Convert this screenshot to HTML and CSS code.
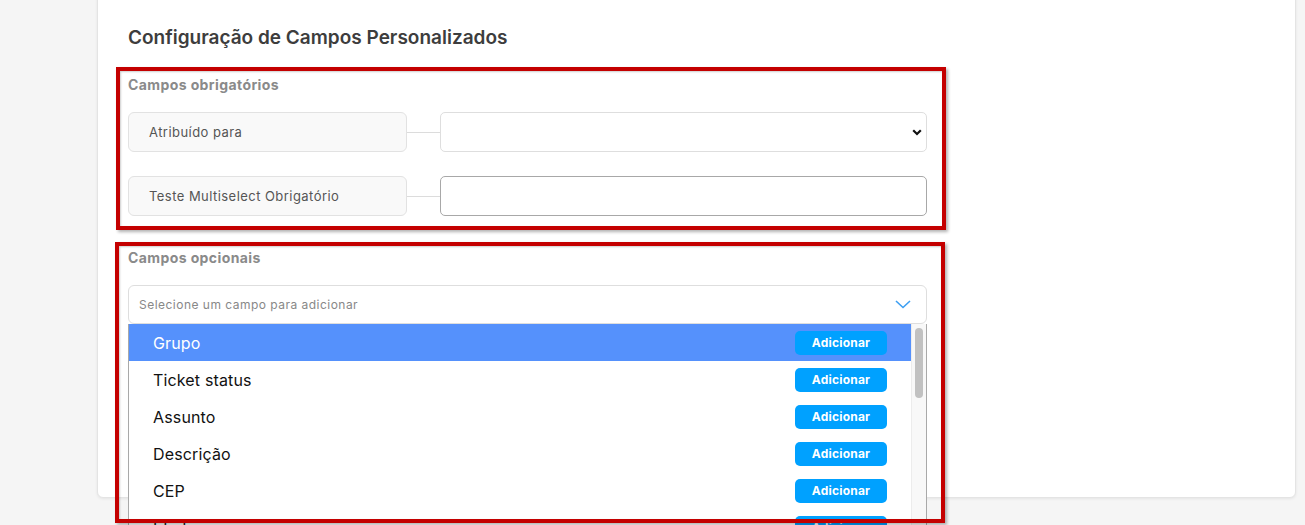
FILE: index.html
```html
<!DOCTYPE html>
<html lang="pt-BR">
<head>
<meta charset="utf-8">
<title>Configuração de Campos Personalizados</title>
<link rel="stylesheet" href="styles.css">
</head>
<body>
<div class="card">
  <h2 class="title">Configuração de Campos Personalizados</h2>

  <section class="group group-required">
    <div class="mark mark-required"></div>
    <h3 class="group-title">Campos obrigatórios</h3>
    <div class="rows">
      <div class="field-row">
        <div class="field-label">Atribuído para</div>
        <span class="connector"></span>
        <select class="field-select"><option></option></select>
      </div>
      <div class="field-row">
        <div class="field-label">Teste Multiselect Obrigatório</div>
        <span class="connector"></span>
        <input class="field-input" type="text">
      </div>
    </div>
  </section>

  <section class="group group-optional">
    <div class="mark mark-optional"></div>
    <h3 class="group-title">Campos opcionais</h3>
    <div class="picker">
      <div class="picker-box">
        <span class="picker-placeholder">Selecione um campo para adicionar</span>
        <svg class="picker-chevron" width="16" height="9" viewBox="0 0 16 9"><polyline points="1,1 8,7.5 15,1" fill="none" stroke="#3d9ff2" stroke-width="1.6"/></svg>
      </div>
      <div class="picker-menu">
        <ul class="picker-list">
          <li class="active"><span>Grupo</span><button>Adicionar</button></li>
          <li><span>Ticket status</span><button>Adicionar</button></li>
          <li><span>Assunto</span><button>Adicionar</button></li>
          <li><span>Descrição</span><button>Adicionar</button></li>
          <li><span>CEP</span><button>Adicionar</button></li>
          <li><span>Idade</span><button>Adicionar</button></li>
        </ul>
        <div class="picker-scroll"><div class="picker-thumb"></div></div>
      </div>
    </div>
  </section>
</div>
</body>
</html>
```

FILE: styles.css
```css
html, body {
  height: 525px;
  overflow: hidden;
}
body {
  margin: 0;
  background-color: #f5f5f5;
  font-family: Inter, "Noto Sans", sans-serif;
  color: #222;
}

.card {
  box-sizing: border-box;
  height: 508px;
  margin: -10px 9px 0 97px;
  padding: 35px 30px 0;
  background-color: #fff;
  border: 1px solid #e4e4e4;
  border-radius: 6px;
  box-shadow: 0 1px 3px rgba(0,0,0,0.07);
}
.title {
  margin: 0;
  font-size: 19px;
  line-height: 24px;
  font-weight: 600;
  color: #3d3d3d;
}

.group {
  position: relative;
  width: 799px;
}
.group-required { margin-top: 26px; }
.group-optional { margin-top: 33px; }
.group-title {
  margin: 0;
  font-size: 14px;
  line-height: 18px;
  font-weight: 700;
  letter-spacing: 0.4px;
  color: #8a8a8a;
}

/* red annotation frames */
.mark {
  position: absolute;
  z-index: 5;
  border: 4px solid #c40000;
  box-shadow: 2px 2px 3px rgba(0,0,0,0.3), inset 1px 1px 2px rgba(0,0,0,0.2);
  pointer-events: none;
}
.mark-required { top: -9px; left: -12px; right: -19px; bottom: -14px; }
.mark-optional { top: -7px; left: -13px; right: -18px; bottom: -199px; }

.rows {
  display: flex;
  flex-direction: column;
  gap: 24px;
  margin-top: 18px;
}
.field-row {
  display: flex;
  align-items: center;
  height: 40px;
}
.field-label {
  box-sizing: border-box;
  flex: 0 0 279px;
  height: 40px;
  display: flex;
  align-items: center;
  padding-left: 20px;
  background-color: #f9f9f9;
  border: 1px solid #e2e2e2;
  border-radius: 6px;
  font-size: 13px;
  letter-spacing: 0.45px;
  color: #555;
}
.connector {
  flex: 0 0 33px;
  height: 1px;
  background-color: #dcdcdc;
}
.field-select, .field-input {
  box-sizing: border-box;
  flex: 1;
  height: 40px;
  margin: 0;
  border-radius: 5px;
  background-color: #fff;
  font-family: inherit;
}
.field-select {
  appearance: none;
  -webkit-appearance: none;
  border: 1px solid #dedede;
  background-image: url("data:image/svg+xml,%3Csvg xmlns='http://www.w3.org/2000/svg' width='10' height='7' viewBox='0 0 10 7'%3E%3Cpolyline points='1.2,1.2 5,5 8.8,1.2' fill='none' stroke='%23111' stroke-width='2.2'/%3E%3C/svg%3E");
  background-repeat: no-repeat;
  background-position: right 4px center;
}
.field-input {
  border: 1px solid #a8a8a8;
}

.picker {
  position: relative;
  margin-top: 18px;
}
.picker-box {
  box-sizing: border-box;
  height: 39px;
  display: flex;
  align-items: center;
  justify-content: space-between;
  padding: 0 15px 0 10px;
  border: 1px solid #dedede;
  border-radius: 6px;
  background-color: #fff;
}
.picker-placeholder {
  font-size: 12px;
  letter-spacing: 0.48px;
  color: #888;
}
.picker-chevron { display: block; }

.picker-menu {
  position: absolute;
  z-index: 3;
  top: 39px;
  left: 0;
  right: 0;
  height: 260px;
  display: flex;
  background-color: #fff;
  border-left: 1px solid #a9a9a9;
  border-right: 1px solid #a9a9a9;
  overflow: hidden;
}
.picker-list {
  flex: 1;
  margin: 0;
  padding: 0;
  list-style: none;
}
.picker-list li {
  height: 37px;
  display: flex;
  align-items: center;
  justify-content: space-between;
  padding: 0 24px 0 24px;
  font-size: 16px;
  letter-spacing: 0.15px;
  color: #111;
}
.picker-list li.active {
  background-color: #5591fc;
  color: #fff;
}
.picker-list button {
  width: 92px;
  height: 24px;
  border: none;
  border-radius: 5px;
  background-color: #00a1ff;
  color: #fff;
  font-family: inherit;
  font-size: 12px;
  font-weight: 700;
  letter-spacing: 0.2px;
}
.picker-scroll {
  flex: 0 0 14px;
  background-color: #f8f8f8;
  border-left: 1px solid #ececec;
}
.picker-thumb {
  width: 8px;
  height: 70px;
  margin: 4px 0 0 3px;
  border-radius: 4px;
  background-color: #c1c1c1;
}
```
